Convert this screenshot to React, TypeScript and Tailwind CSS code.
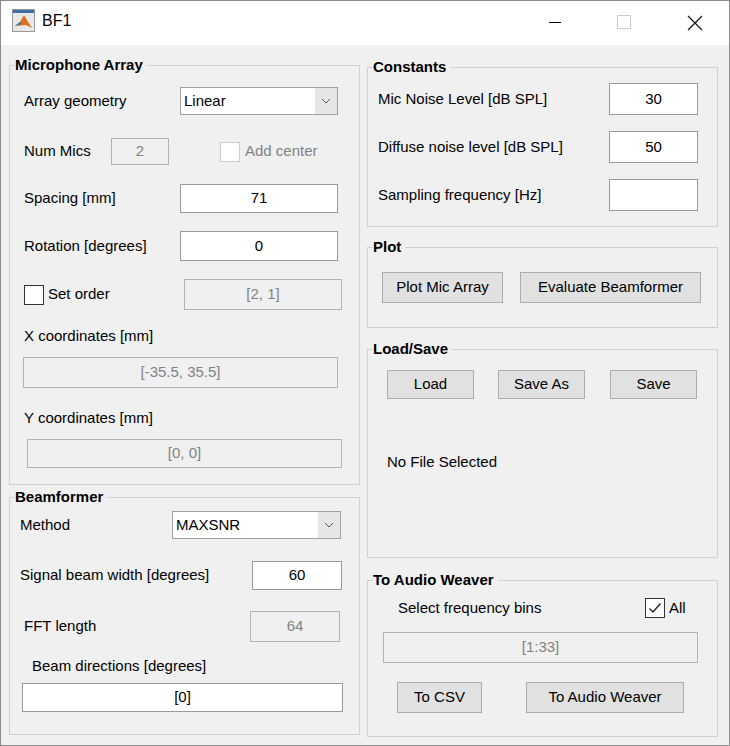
import React from "react";

const F = { fontFamily: '"Liberation Sans", Arial, sans-serif' };

function Panel({ title, h, mt = 0, children }: { title: string; h: number; mt?: number; children?: React.ReactNode }) {
  return (
    <div className="relative border border-[#d0d0d0] box-border flex flex-col" style={{ height: h, marginTop: mt }}>
      <div className="absolute left-[5px] top-[-10px] bg-[#f0f0f0] pr-[4px] text-[15px] font-bold leading-[18px] text-black">{title}</div>
      {children}
    </div>
  );
}

function Input({ w, h, v, disabled, ml = 0 }: { w: number; h: number; v: string; disabled?: boolean; ml?: number }) {
  return (
    <div
      className={`shrink-0 flex items-center justify-center box-border border text-[15px] ${disabled ? "bg-[#f0f0f0] border-[#b4b4b4] text-[#838383]" : "bg-white border-[#9a9a9a] text-black"}`}
      style={{ width: w, height: h, marginLeft: ml }}
    >
      {v}
    </div>
  );
}

function Btn({ w, h, v, ml = 0 }: { w: number; h: number; v: string; ml?: number }) {
  return (
    <div className="shrink-0 flex items-center justify-center box-border border border-[#adadad] bg-[#e1e1e1] text-[15px] text-black" style={{ width: w, height: h, marginLeft: ml }}>
      {v}
    </div>
  );
}

function Select({ w, h, v, ml = 0 }: { w: number; h: number; v: string; ml?: number }) {
  return (
    <div className="shrink-0 flex box-border border border-[#a0a0a0] bg-white text-[15px]" style={{ width: w, height: h, marginLeft: ml }}>
      <div className="flex-1 flex items-center pl-[3px]">{v}</div>
      <div className="w-[22px] bg-[#e6e6e6] flex items-center justify-center">
        <svg width="10" height="6" viewBox="0 0 10 6"><path d="M1 1l4 4 4-4" fill="none" stroke="#555" strokeWidth="1" /></svg>
      </div>
    </div>
  );
}

function Check({ checked, disabled, ml = 0 }: { checked?: boolean; disabled?: boolean; ml?: number }) {
  return (
    <div className={`shrink-0 w-[20px] h-[20px] box-border border bg-white flex items-center justify-center ${disabled ? "border-[#cccccc]" : "border-[#333]"}`} style={{ marginLeft: ml }}>
      {checked && <svg width="14" height="12" viewBox="0 0 14 12"><path d="M1.5 6.5l3.5 3.5 7.5-8.5" fill="none" stroke="#222" strokeWidth="1.4" /></svg>}
    </div>
  );
}

function Row({ mt, h, children }: { mt: number; h: number; children: React.ReactNode }) {
  return <div className="flex items-center shrink-0" style={{ marginTop: mt, height: h }}>{children}</div>;
}

function Label({ w, ml, children, gray }: { w?: number; ml: number; children: React.ReactNode; gray?: boolean }) {
  return <div className={`shrink-0 text-[15px] whitespace-nowrap ${gray ? "text-[#838383]" : "text-black"}`} style={{ width: w, marginLeft: ml }}>{children}</div>;
}

export default function App() {
  return (
    <div style={F} className="w-[730px] h-[746px] box-border border border-[#8c8c8c] flex flex-col bg-[#f0f0f0] text-black overflow-hidden">
      <div className="h-[44px] bg-white flex items-center shrink-0 relative">
        <svg width="23" height="23" viewBox="0 0 23 23" className="ml-[11px] mt-[-5px]">
          <rect x="0.5" y="0.5" width="22" height="22" fill="#e8e8e8" stroke="#999" />
          <rect x="1" y="1" width="21" height="3" fill="#3a6ea5" />
          <path d="M3 17 L8 13 L12 6 L16 13 L20 19 L14 16 Z" fill="#e07020" />
          <path d="M3 17 L8 13 L10 15 Z" fill="#2a7ab5" />
        </svg>
        <span className="ml-[7px] mt-[-5px] text-[16px]">BF1</span>
        <div className="absolute left-[548px] top-[21px] w-[12px] h-[1px] bg-black" />
        <div className="absolute left-[616px] top-[14px] w-[14px] h-[14px] border border-[#c8c8c8]" />
        <svg className="absolute left-[686px] top-[14px]" width="16" height="16" viewBox="0 0 16 16"><path d="M1 1L15 15M15 1L1 15" stroke="#111" strokeWidth="1.2" /></svg>
      </div>
      <div className="flex flex-1 pl-[8px]">
        <div className="w-[351px] flex flex-col">
          <Panel title="Microphone Array" h={420} mt={20}>
            <Row mt={21} h={28}><Label w={156} ml={14}>Array geometry</Label><Select w={158} h={28} v="Linear" ml={0} /></Row>
            <Row mt={23} h={27}><Label w={87} ml={14}>Num Mics</Label><Input w={58} h={27} v="2" disabled /><Check disabled ml={51} /><Label ml={5} gray>Add center</Label></Row>
            <Row mt={19} h={29}><Label w={156} ml={14}>Spacing [mm]</Label><Input w={158} h={29} v="71" /></Row>
            <Row mt={18} h={30}><Label w={156} ml={14}>Rotation [degrees]</Label><Input w={158} h={30} v="0" /></Row>
            <Row mt={18} h={31}><Check ml={14} /><Label w={136} ml={4}>Set order</Label><Input w={158} h={31} v="[2, 1]" disabled /></Row>
            <Row mt={17} h={18}><Label ml={14}>X coordinates [mm]</Label></Row>
            <Row mt={12} h={31}><Input w={315} h={31} v="[-35.5, 35.5]" disabled ml={13} /></Row>
            <Row mt={21} h={18}><Label ml={14}>Y coordinates [mm]</Label></Row>
            <Row mt={12} h={29}><Input w={315} h={29} v="[0, 0]" disabled ml={17} /></Row>
          </Panel>
          <Panel title="Beamformer" h={238} mt={12}>
            <Row mt={13} h={28}><Label w={152} ml={10}>Method</Label><Select w={169} h={28} v="MAXSNR" /></Row>
            <Row mt={22} h={29}><Label w={232} ml={10}>Signal beam width [degrees]</Label><Input w={90} h={29} v="60" /></Row>
            <Row mt={21} h={31}><Label w={226} ml={14}>FFT length</Label><Input w={90} h={31} v="64" disabled /></Row>
            <Row mt={15} h={18}><Label ml={22}>Beam directions [degrees]</Label></Row>
            <Row mt={8} h={29}><Input w={321} h={29} v="[0]" ml={12} /></Row>
          </Panel>
        </div>
        <div className="w-[351px] ml-[7px] flex flex-col">
          <Panel title="Constants" h={160} mt={22}>
            <Row mt={15} h={32}><Label w={231} ml={10}>Mic Noise Level [dB SPL]</Label><Input w={89} h={32} v="30" /></Row>
            <Row mt={16} h={32}><Label w={231} ml={10}>Diffuse noise level [dB SPL]</Label><Input w={89} h={32} v="50" /></Row>
            <Row mt={16} h={32}><Label w={231} ml={10}>Sampling frequency [Hz]</Label><Input w={89} h={32} v="" /></Row>
          </Panel>
          <Panel title="Plot" h={81} mt={20}>
            <Row mt={24} h={31}><Btn w={121} h={31} v="Plot Mic Array" ml={14} /><Btn w={181} h={31} v="Evaluate Beamformer" ml={17} /></Row>
          </Panel>
          <Panel title="Load/Save" h={209} mt={21}>
            <Row mt={20} h={29}><Btn w={87} h={29} v="Load" ml={19} /><Btn w={87} h={29} v="Save As" ml={24} /><Btn w={87} h={29} v="Save" ml={25} /></Row>
            <Row mt={54} h={18}><Label ml={19}>No File Selected</Label></Row>
          </Panel>
          <Panel title="To Audio Weaver" h={157} mt={22}>
            <Row mt={17} h={20}><Label w={247} ml={30}>Select frequency bins</Label><Check checked /><Label ml={4}>All</Label></Row>
            <Row mt={14} h={31}><Input w={315} h={31} v="[1:33]" disabled ml={15} /></Row>
            <Row mt={19} h={31}><Btn w={85} h={31} v="To CSV" ml={29} /><Btn w={158} h={31} v="To Audio Weaver" ml={44} /></Row>
          </Panel>
        </div>
      </div>
    </div>
  );
}
